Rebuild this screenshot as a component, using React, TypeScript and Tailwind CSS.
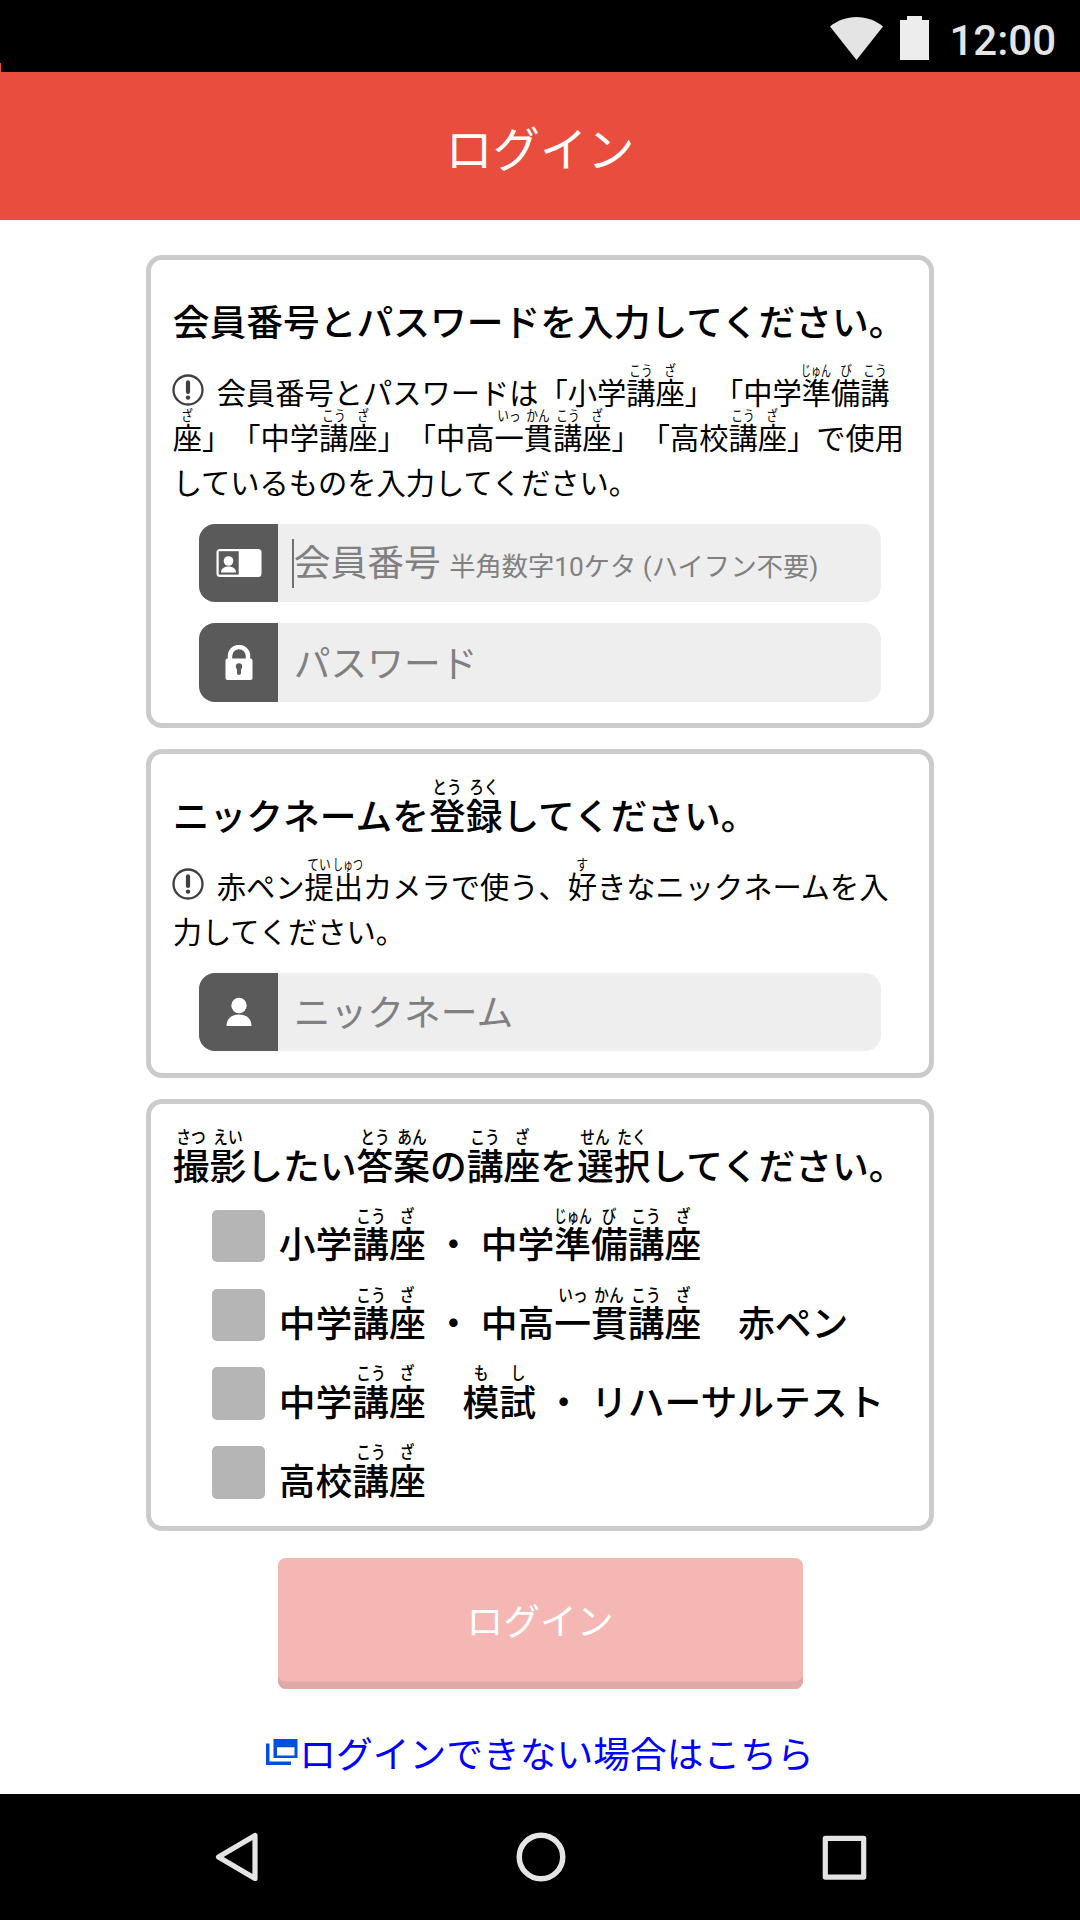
import React from 'react';
import clsx from 'clsx';

type FuriganaProps = {
  base: string;
  kana: string;
};

// One kanji with its reading above it. Readings are condensed so they fit the kanji.
const Furigana = ({ base, kana }: FuriganaProps) => (
  <span className="relative inline-block w-[1em] text-center leading-none">
    {base}
    <span
      className={clsx(
        'absolute left-1/2 bottom-[2.12em] -translate-x-1/2 text-[0.5em] leading-none whitespace-nowrap',
        kana.length > 2 ? 'scale-x-[0.68]' : 'scale-x-[0.8]'
      )}
    >
      {kana}
    </span>
  </span>
);

const Kouza = () => (
  <>
    <Furigana base="講" kana="こう" />
    <Furigana base="座" kana="ざ" />
  </>
);

const Ikkan = () => (
  <>
    <Furigana base="一" kana="いっ" />
    <Furigana base="貫" kana="かん" />
  </>
);

const Junbi = () => (
  <>
    <Furigana base="準" kana="じゅん" />
    <Furigana base="備" kana="び" />
  </>
);

const Card = ({ className, children }: { className: string; children: React.ReactNode }) => (
  <section className={clsx('w-[787.5px] rounded-[16px] border-[5px] border-[#cbcbcb] pl-[21.5px]', className)}>
    {children}
  </section>
);

const CardTitle = ({ children }: { children: React.ReactNode }) => (
  <h2 className="mt-[39px] h-[50px] text-[36.75px] leading-[50px] font-medium">{children}</h2>
);

const Note = ({ children }: { children: React.ReactNode }) => (
  <p className="mt-[23px] text-[29.25px] leading-[45px]">
    <svg className="relative -top-[3px] -mt-[6px] mr-[12.5px] -ml-[0.5px] inline-block align-middle" width="32" height="32" viewBox="0 0 32 32" fill="none">
      <circle cx="16" cy="16" r="14.5" stroke="#404040" strokeWidth="2.3" />
      <path d="M16 8.4v9.6" stroke="#404040" strokeWidth="4.2" strokeLinecap="round" />
      <circle cx="16" cy="23.6" r="2.2" fill="#404040" />
    </svg>
    {children}
  </p>
);

const Field = ({ icon, className, children }: { icon: React.ReactNode; className: string; children: React.ReactNode }) => (
  <div className={clsx('ml-[26.5px] flex h-[78.5px] w-[682px] overflow-hidden rounded-[16px] bg-[#eee]', className)}>
    <div className="flex w-[78.5px] items-center justify-center bg-[#5a5a5a]">{icon}</div>
    <div className="flex items-center pl-[14px] text-[36.75px] leading-[50px] text-[#808080]">{children}</div>
  </div>
);

const CardIcon = () => (
  <svg width="46" height="30" viewBox="0 0 46 30">
    <rect x="0.5" y="1" width="45" height="28" rx="3.5" fill="#fff" />
    <rect x="2.7" y="3.2" width="20" height="23.4" fill="#5a5a5a" />
    <circle cx="12.5" cy="13" r="4.8" fill="#fff" />
    <path d="M5 24.4c0-3.6 2.8-6 7.5-6s7.5 2.4 7.5 6z" fill="#fff" />
  </svg>
);

const LockIcon = () => (
  <svg width="28" height="36" viewBox="0 0 28 36">
    <path d="M5 15v-4a9 9 0 0 1 18 0v4" fill="none" stroke="#fff" strokeWidth="4.4" />
    <rect x="0.5" y="13.5" width="27" height="21.5" rx="2" fill="#fff" />
    <circle cx="14" cy="21.5" r="3.2" fill="#5a5a5a" />
    <path d="M14 22v6" stroke="#5a5a5a" strokeWidth="4" strokeLinecap="round" />
  </svg>
);

const PersonIcon = () => (
  <svg width="26" height="30" viewBox="0 0 26 30">
    <circle cx="13" cy="8.5" r="7.7" fill="#fff" />
    <path d="M0.5 29c0-7 4.5-11.5 12.5-11.5S25.5 22 25.5 29z" fill="#fff" />
  </svg>
);

const StatusBar = () => (
  <div className="relative flex h-[72px] justify-end bg-black pr-[24px]">
    <span className="absolute left-0 top-[63px] h-[9px] w-px bg-[#e84d3d]" />
    <svg className="mt-[17px] mr-[17px]" width="53" height="43" viewBox="0 0 53 43" fill="#e4e4e4">
      <path d="M26.5 43 0 9.5C7.5 3.5 16.5 0 26.5 0S45.5 3.5 53 9.5z" />
    </svg>
    <svg className="mt-[16px] mr-[20px]" width="29" height="44" viewBox="0 0 29 44" fill="#ededed">
      <path d="M7 0h15v4h7v40H0V4h7z" />
    </svg>
    <span className="mt-[17px] text-[42px] leading-[48px] font-medium text-[#e4e4e4]">12:00</span>
  </div>
);

const NavBar = () => (
  <div className="flex h-[126px] items-center justify-between bg-black pr-[213px] pl-[214px]">
    <svg width="46" height="52" viewBox="0 0 46 52" fill="none" stroke="#e4e4e4" strokeWidth="5.2" strokeLinejoin="round">
      <path d="M41 4.5v43L4.5 26z" />
    </svg>
    <svg width="50" height="50" viewBox="0 0 50 50" fill="none" stroke="#e4e4e4" strokeWidth="5.5">
      <circle cx="25" cy="25" r="21.75" />
    </svg>
    <svg width="45" height="45" viewBox="0 0 45 45" fill="none" stroke="#e4e4e4" strokeWidth="5.2" strokeLinejoin="round">
      <rect x="3.3" y="3.3" width="38.4" height="38.8" />
    </svg>
  </div>
);

const courses = [
  <>小学<Kouza /> ・ 中学<Junbi /><Kouza /></>,
  <>中学<Kouza /> ・ 中高<Ikkan /><Kouza />　赤ペン</>,
  <>中学<Kouza />　<Furigana base="模" kana="も" /><Furigana base="試" kana="し" /> ・ リハーサルテスト</>,
  <>高校<Kouza /></>,
];

const App = () => {
  return (
    <div
      lang="ja"
      className="flex h-[1920px] w-[1080px] flex-col overflow-hidden bg-white font-[Roboto,'Noto_Sans_CJK_JP',sans-serif] whitespace-nowrap text-black [text-spacing-trim:space-all]"
    >
      <StatusBar />
      <header className="flex h-[148.3px] shrink-0 items-center justify-center bg-[#e84d3d] text-[47.25px] leading-[60px] text-white">
        <h1 className="mt-[10px]">ログイン</h1>
      </header>

      <main className="flex flex-1 flex-col items-center pt-[34.7px]">
        <Card className="h-[473px]">
          <CardTitle>会員番号とパスワードを入力してください。</CardTitle>
          <Note>
            会員番号とパスワードは「小学<Kouza />」「中学<Junbi /><Furigana base="講" kana="こう" />
            <br />
            <Furigana base="座" kana="ざ" />」「中学<Kouza />」「中高<Ikkan /><Kouza />」「高校<Kouza />」で使用
            <br />
            しているものを入力してください。
          </Note>
          <Field className="mt-[17px]" icon={<CardIcon />}>
            <span className="h-[49px] w-[2px] bg-[#707070]" />
            <span className="pt-[5px]">
              会員番号<span className="ml-[2px] text-[26.25px]"> 半角数字10ケタ (ハイフン不要)</span>
            </span>
          </Field>
          <Field className="mt-[21px]" icon={<LockIcon />}>
            <span className="ml-[2px] pt-[4px]">パスワード</span>
          </Field>
        </Card>

        <Card className="mt-[21px] h-[329px]">
          <CardTitle>
            ニックネームを<Furigana base="登" kana="とう" /><Furigana base="録" kana="ろく" />してください。
          </CardTitle>
          <Note>
            赤ペン<Furigana base="提" kana="てい" /><Furigana base="出" kana="しゅつ" />カメラで使う、
            <Furigana base="好" kana="す" />きなニックネームを入
            <br />
            力してください。
          </Note>
          <Field className="mt-[17px]" icon={<PersonIcon />}>
            <span className="ml-[2px] pt-[4px]">ニックネーム</span>
          </Field>
        </Card>

        <Card className="mt-[21px] h-[432.5px]">
          <CardTitle>
            <Furigana base="撮" kana="さつ" /><Furigana base="影" kana="えい" />したい
            <Furigana base="答" kana="とう" /><Furigana base="案" kana="あん" />の<Kouza />を
            <Furigana base="選" kana="せん" /><Furigana base="択" kana="たく" />してください。
          </CardTitle>
          <ul className="mt-[17px] ml-[39.5px]">
            {courses.map((course, i) => (
              <li key={i} className="flex h-[78.75px] items-start text-[36.75px] leading-[50px] font-medium">
                <span className="mr-[14px] h-[52.5px] w-[52.5px] rounded-[5px] bg-[#b5b5b5]" />
                <span className="mt-[11.5px]">{course}</span>
              </li>
            ))}
          </ul>
        </Card>

        <button className="mt-[26.5px] h-[131px] w-[525px] rounded-[8px] bg-[#f5b7b3] pb-[1px] text-[36.75px] leading-[50px] text-white shadow-[inset_0_-7.5px_0_#dfaaa6]">
          ログイン
        </button>

        <a className="mt-[36px] flex items-center text-[36.75px] leading-[52px] text-[#0000ff]">
          <svg className="mr-px" width="32" height="30" viewBox="0 0 32 30" fill="#004fe0">
            <path d="M7.5 1H31.5V20H7.5zM11 9.3V17.5H28.5V9.3z" fillRule="evenodd" />
            <path d="M0 5.5H3.5V23.5H25V27H0z" />
          </svg>
          <span className="pt-[5px]">ログインできない場合はこちら</span>
        </a>
      </main>

      <NavBar />
    </div>
  );
};

export default App;
